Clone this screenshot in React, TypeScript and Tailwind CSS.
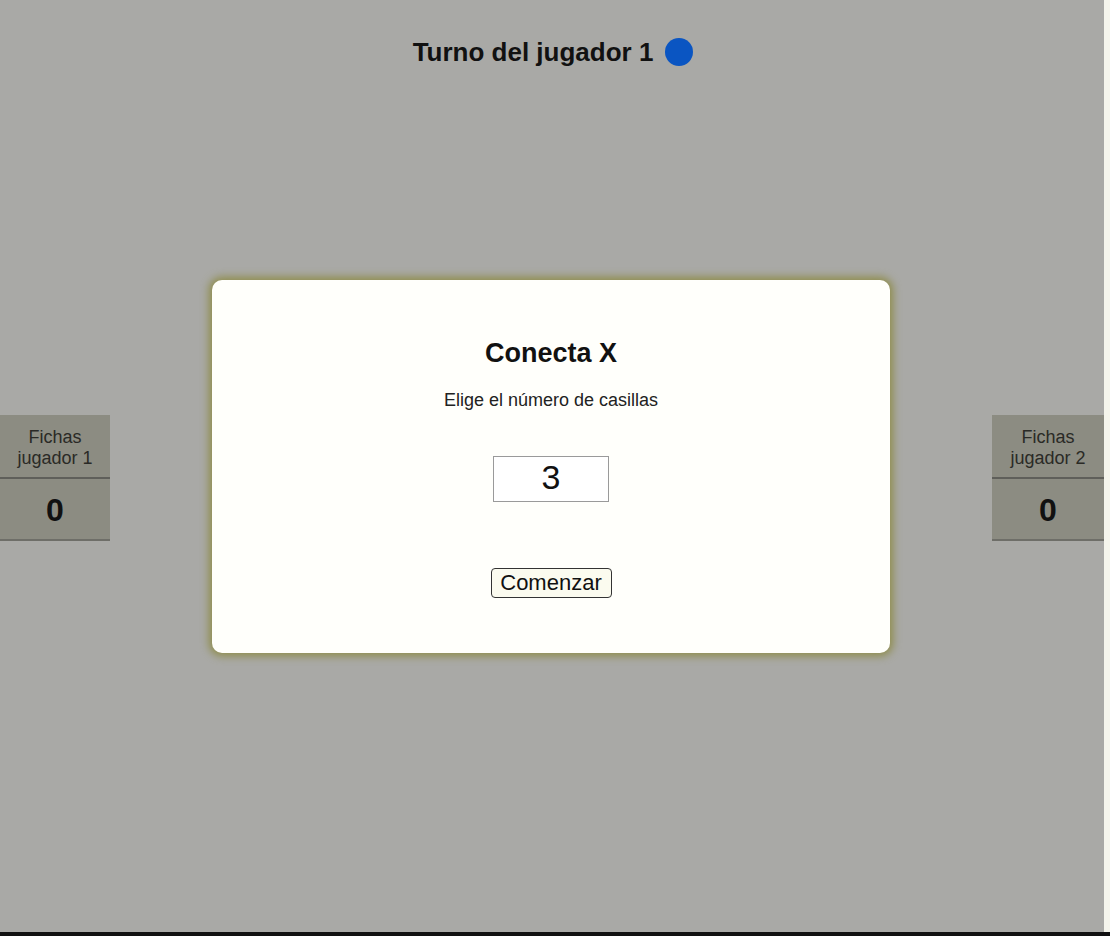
import React from "react";

const font = { fontFamily: '"Liberation Sans", Arial, sans-serif' };

function ScoreBox({ label, value, w }: { label: string; value: string; w: string }) {
  return (
    <div className={`flex ${w} flex-col bg-[#8c8c82] text-center`}>
      <div className="flex h-[64px] flex-col items-center justify-center border-b-2 border-[#5f5f5a] pt-[3px] text-[18px] leading-[21px] text-[#2a2a26]">
        <span>Fichas</span>
        <span>{label}</span>
      </div>
      <div className="flex h-[62px] items-center justify-center border-b-2 border-[#6e6e68] pt-[2px] text-[32px] font-bold text-[#111]">
        {value}
      </div>
    </div>
  );
}

export default function App() {
  return (
    <div className="flex h-[936px] w-[1110px] flex-col bg-[#111]" style={font}>
      <div className="flex h-[932px] w-full">
        <div className="flex h-full w-[1104px] flex-col bg-[#a9a9a6]">
          <div className="flex h-[102px] items-center justify-center gap-[12px] pl-[2px] pt-[2px]">
            <span className="text-[26px] font-bold text-[#111]">Turno del jugador 1</span>
            <span className="h-[28px] w-[28px] rounded-full bg-[#0a55c2]" />
          </div>
          <div className="flex flex-1 items-start pt-[178px]">
            <div className="pt-[135px]">
              <ScoreBox label="jugador 1" value="0" w="w-[110px]" />
            </div>
            <div className="ml-[102px] mr-[102px] flex h-[373px] w-[678px] flex-col items-center rounded-[10px] bg-[#fffffb] pt-[56px] shadow-[0_0_8px_3px_#8e8c4a]">
              <div className="text-[27px] font-bold leading-[34px] text-[#111]">Conecta X</div>
              <div className="mt-[17px] text-[18px] text-[#222]">Elige el número de casillas</div>
              <div className="mt-[42px] flex h-[46px] w-[116px] items-center justify-center border border-[#9a9a9a] bg-white pb-[3px] text-[34px] text-[#111]">
                3
              </div>
              <button
                className="mt-[66px] h-[30px] w-[121px] rounded-[4px] border border-[#333] bg-[#fbfbef] text-[22px] leading-none text-[#111]"
                style={font}
              >
                Comenzar
              </button>
            </div>
            <div className="pt-[135px]">
              <ScoreBox label="jugador 2" value="0" w="w-[112px]" />
            </div>
          </div>
        </div>
        <div className="h-full flex-1 bg-[#f5f5ec]" />
      </div>
    </div>
  );
}
